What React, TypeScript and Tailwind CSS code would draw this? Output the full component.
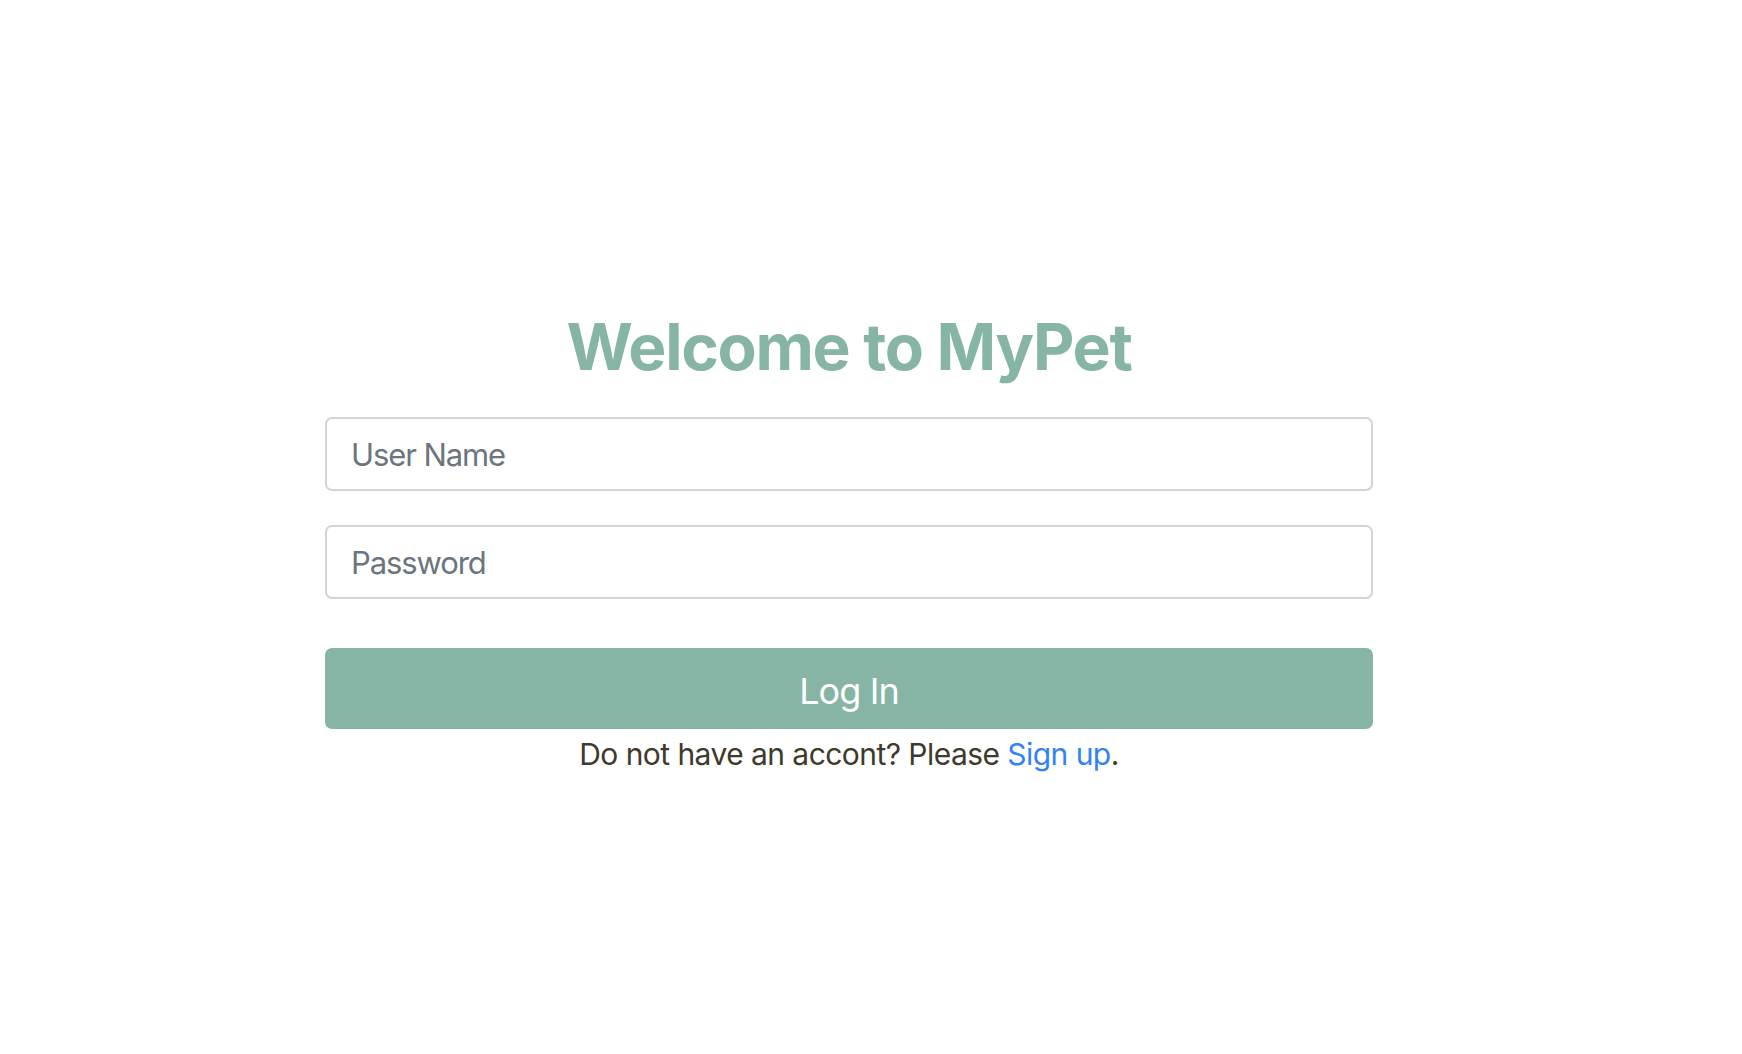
import React from 'react';

export default function App() {
    return (
        <div className="min-h-screen w-full bg-white font-['Inter','Liberation_Sans',sans-serif]">
            <div className="ml-[325px] w-[1048px] pt-[308px] flex flex-col">
                <h1 className="text-center text-[64px] leading-[77px] font-bold text-[#86b5a6] tracking-[-1.3px]">
                    Welcome to MyPet
                </h1>

                <form className="mt-[32px] flex flex-col" onSubmit={(e) => e.preventDefault()}>
                    <input
                        type="text"
                        placeholder="User Name"
                        className="h-[74px] w-full rounded-[7px] border-2 border-[#d0d4da] bg-white px-6 text-[31px] tracking-[-1.1px] text-[#495057] placeholder:text-[#6c757d] focus:outline-none"
                    />
                    <input
                        type="password"
                        placeholder="Password"
                        className="mt-[34px] h-[74px] w-full rounded-[7px] border-2 border-[#d0d4da] bg-white px-6 text-[31px] tracking-[-1.1px] text-[#495057] placeholder:text-[#6c757d] focus:outline-none"
                    />

                    <button
                        type="submit"
                        className="mt-[49px] h-[81px] w-full rounded-[7px] bg-[#86b5a6] pt-1 text-[36px] tracking-[-0.9px] text-white"
                    >
                        Log In
                    </button>

                    <p className="mt-[3px] text-center text-[30px] leading-[45px] tracking-[-0.55px] text-[#3e3a2c]">
                        Do not have an accont? Please{' '}
                        <a href="#" className="text-[#3282f6]">Sign up</a>.
                    </p>
                </form>
            </div>
        </div>
    );
}
